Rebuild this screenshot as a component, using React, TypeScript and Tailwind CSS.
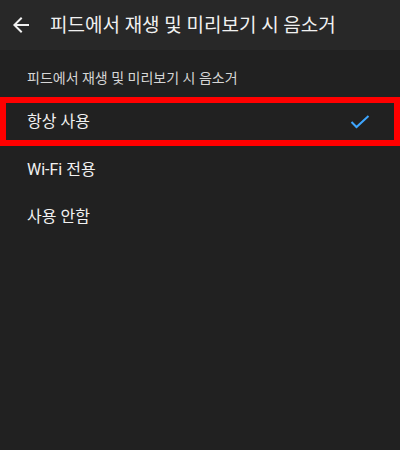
import * as React from 'react';

const FONT = "font-['Roboto','Noto_Sans_CJK_KR',sans-serif]";

type Option = { label: string; selected?: boolean };

const options: Option[] = [
  { label: '항상 사용', selected: true },
  { label: 'Wi-Fi 전용' },
  { label: '사용 안함' },
];

function BackArrow() {
  return (
    <svg width="24" height="24" viewBox="0 0 24 24" className="fill-[#f1f1f1]">
      <path d="M20 11H7.83l5.59-5.59L12 4l-8 8 8 8 1.41-1.41L7.83 13H20v-2z" />
    </svg>
  );
}

function Check() {
  return (
    <svg width="20" height="14" viewBox="0 0 20 14" fill="none">
      <polyline points="1.5,7 6.5,12 18.5,1" stroke="#3ea6ff" strokeWidth="2" />
    </svg>
  );
}

export default function App() {
  return (
    <div className={`w-[400px] h-[450px] bg-[#212121] ${FONT}`}>
      <div className="h-[50px] bg-[#282828] flex items-center">
        <div className="pl-[9px] w-[50px] flex items-center">
          <BackArrow />
        </div>
        <div className="text-[19px] text-[#f1f1f1] leading-none">피드에서 재생 및 미리보기 시 음소거</div>
      </div>

      <div className="h-[47px] pt-[19px] pl-[27px] text-[14px] leading-[18px] text-[#d6d6d6]">
        피드에서 재생 및 미리보기 시 음소거
      </div>

      {options.map((opt) =>
        opt.selected ? (
          <div
            key={opt.label}
            className="h-[49px] border-[6px] border-[#ff0000] flex items-center justify-between pl-[21px] pr-[24px]"
          >
            <span className="text-[16px] text-[#f1f1f1]">{opt.label}</span>
            <Check />
          </div>
        ) : (
          <div key={opt.label} className="h-[47px] flex items-center pl-[27px]">
            <span className="text-[16px] text-[#f1f1f1]">{opt.label}</span>
          </div>
        )
      )}
    </div>
  );
}
